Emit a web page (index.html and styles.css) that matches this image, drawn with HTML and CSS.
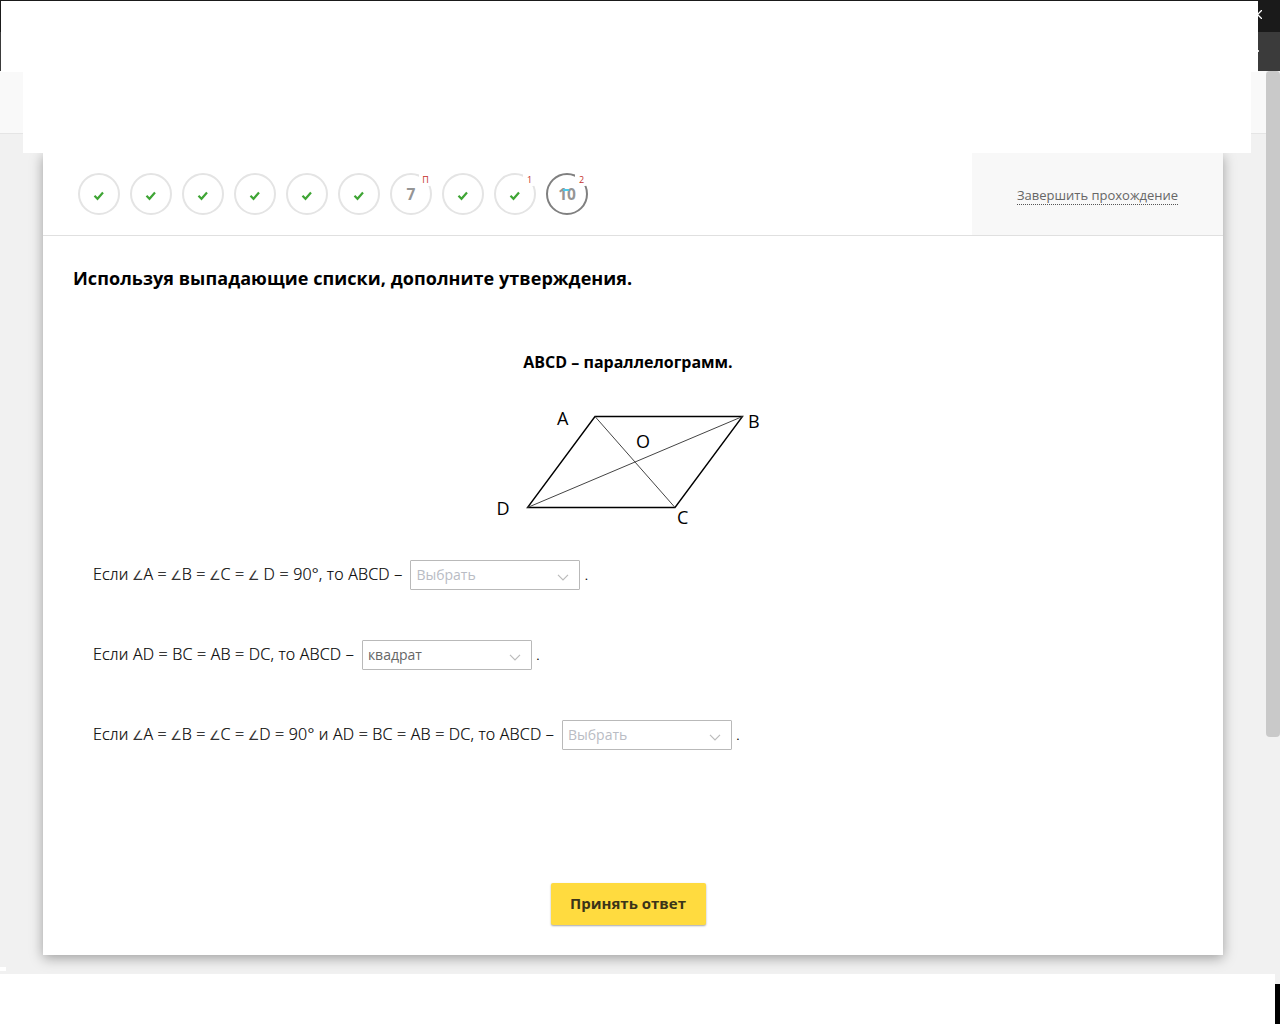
FILE: index.html
```
<!DOCTYPE html>
<html lang="ru">
  <head>
    <meta charset="utf-8" />
    <title>Тест</title>
    <link rel="stylesheet" href="styles.css" />
  </head>
  <body>
    <svg width="0" height="0" class="defs">
      <symbol id="check" viewBox="0 0 12 10">
        <path d="M1.5 4.8l3 3L10 1.6" fill="none" stroke="#3fa535" stroke-width="2.2" />
      </symbol>
      <symbol id="arrow" viewBox="0 0 12 7">
        <path d="M1 .8l5 5 5-5" fill="none" stroke="#bbb" stroke-width="1.2" />
      </symbol>
    </svg>

    <div class="window">
      <div class="titlebar">
        <svg class="close" width="9" height="9" viewBox="0 0 9 9">
          <path d="M0 0l9 9M9 0L0 9" stroke="#fff" stroke-width="1.3" />
        </svg>
      </div>
      <div class="toolbar"><span class="dot"></span></div>
      <div class="viewport">
        <div class="page">
          <div class="site-header"></div>
          <div class="card">
            <div class="steps-bar">
              <div class="steps">
                <div class="step"><svg><use href="#check" /></svg></div>
                <div class="step"><svg><use href="#check" /></svg></div>
                <div class="step"><svg><use href="#check" /></svg></div>
                <div class="step"><svg><use href="#check" /></svg></div>
                <div class="step"><svg><use href="#check" /></svg></div>
                <div class="step"><svg><use href="#check" /></svg></div>
                <div class="step">7<span class="badge">П</span></div>
                <div class="step"><svg><use href="#check" /></svg></div>
                <div class="step"><svg><use href="#check" /></svg><span class="badge">1</span></div>
                <div class="step active">10<span class="mark"></span><span class="badge">2</span></div>
              </div>
              <div class="finish"><a class="finish-link">Завершить прохождение</a></div>
            </div>

            <div class="task">
              <h1>Используя выпадающие списки, дополните утверждения.</h1>
              <p class="caption">ABCD – параллелограмм.</p>
              <svg class="figure" width="280" height="130" viewBox="0 0 280 130">
                <path d="M107 14.5h147.5L187 105.5H39.5z" fill="none" stroke="#000" stroke-width="1.4" />
                <path d="M107 14.5L187 105.5M39.5 105.5L254.5 14.5" stroke="#444" stroke-width="1" />
                <text x="69" y="23">A</text>
                <text x="260" y="26">B</text>
                <text x="189" y="122">C</text>
                <text x="8.5" y="113">D</text>
                <text x="148" y="46">O</text>
              </svg>

              <div class="line">
                <span>Если <i>∠</i>A = <i>∠</i>B = <i>∠</i>C = <i>∠</i> D = 90°, то ABCD –</span>
                <div class="select">Выбрать<svg><use href="#arrow" /></svg></div>
                <span>.</span>
              </div>
              <div class="line">
                <span>Если AD = BC = AB = DC, то ABCD –</span>
                <div class="select chosen">квадрат<svg><use href="#arrow" /></svg></div>
                <span>.</span>
              </div>
              <div class="line">
                <span>Если <i>∠</i>A = <i>∠</i>B = <i>∠</i>C = <i>∠</i>D = 90° и AD = BC = AB = DC, то ABCD –</span>
                <div class="select">Выбрать<svg><use href="#arrow" /></svg></div>
                <span>.</span>
              </div>

              <button class="submit">Принять ответ</button>
            </div>
          </div>
        </div>
        <div class="scrollbar"><div class="thumb"></div></div>
      </div>

      <!-- blank panels over the browser chrome -->
      <div class="cover cover-top"></div>
      <div class="cover cover-header"></div>
      <div class="cover cover-bottom"></div>
      <div class="cover cover-spot"></div>
      <div class="corner"></div>
    </div>
  </body>
</html>
```

FILE: styles.css
```
* {
  box-sizing: border-box;
}

body {
  margin: 0;
  font-family: "Open Sans", sans-serif;
  color: #000;
}

.defs {
  position: absolute;
}

.window {
  position: relative;
  width: 1280px;
  height: 1024px;
  overflow: hidden;
  display: flex;
  flex-direction: column;
}

.titlebar {
  height: 32px;
  flex: none;
  background-color: #1a1a1a;
  display: flex;
  justify-content: flex-end;
  padding: 10px 18px 0 0;
}

.toolbar {
  height: 39px;
  flex: none;
  background-color: #3b3b3b;
  display: flex;
  justify-content: flex-end;
  padding: 18px 21px 0 0;
}

.dot {
  width: 2px;
  height: 2px;
  background-color: #ddd;
}

.viewport {
  flex: 1;
  display: flex;
  background-color: #f1f1f1;
}

.page {
  flex: 1;
}

.site-header {
  height: 63px;
  background-color: #f9f9f9;
  border-bottom: 1px solid #e5e5e5;
}

.scrollbar {
  width: 14px;
}

.thumb {
  height: 666px;
  background-color: #c9c9c9;
  border-radius: 4px;
}

.card {
  width: 1180px;
  height: 802px;
  margin: 19px 0 0 43px;
  background-color: #fff;
  box-shadow: 0 3px 12px rgba(0, 0, 0, 0.35);
}

.steps-bar {
  height: 83px;
  display: flex;
  justify-content: space-between;
  border-bottom: 1px solid #e0e0e0;
}

.steps {
  display: flex;
  gap: 10px;
  padding: 20px 0 0 35px;
}

.step {
  position: relative;
  width: 42px;
  height: 42px;
  border: 2px solid #e4e4e4;
  border-radius: 50%;
  display: flex;
  align-items: center;
  justify-content: center;
  font-size: 15.5px;
  line-height: 22px;
  font-weight: 700;
  color: #959595;
}

.step svg {
  width: 12px;
  height: 10px;
  margin-top: 4px;
}

.step.active {
  border-color: #808080;
}

.badge {
  position: absolute;
  top: -3px;
  right: -2px;
  width: 13px;
  height: 14px;
  background-color: #fff;
  border-radius: 3px;
  color: #c4302b;
  font-size: 9px;
  font-weight: 400;
  line-height: 15px;
  text-align: center;
}

.mark {
  position: absolute;
  top: 14px;
  left: 15px;
  width: 6px;
  height: 2px;
  background-color: #4cc9e8;
}

.finish {
  width: 251px;
  background-color: #f8f8f8;
  display: flex;
  justify-content: center;
  align-items: center;
}

.finish-link {
  color: #666;
  font-size: 13px;
  line-height: 18px;
  border-bottom: 1px dotted #555;
  margin-top: 3px;
}

.task {
  display: flex;
  flex-direction: column;
  padding: 0 50px;
}

h1 {
  margin: 29px 0 0 -20px;
  font-size: 18px;
  line-height: 26px;
  font-weight: 700;
  letter-spacing: 0.055px;
}

.caption {
  margin: 59px 0 0;
  width: 1070px;
  text-align: center;
  font-size: 16px;
  line-height: 24px;
  font-weight: 700;
}

.figure {
  margin: 28px 0 0 395px;
}

.figure text {
  font-family: "Open Sans", sans-serif;
  font-size: 18px;
}

.line {
  display: flex;
  align-items: center;
  height: 30px;
  margin-bottom: 50px;
  font-size: 16px;
  font-weight: 300;
  letter-spacing: 0.2px;
  white-space: pre;
}

.line > span {
  padding-bottom: 2px;
  -webkit-text-stroke: 0.2px #000;
}

.figure + .line {
  margin-top: 28px;
}

.line i {
  display: inline-block;
  width: 10.5px;
  font: 13px "DejaVu Sans", sans-serif;
  color: #333;
  text-indent: -1px;
  -webkit-text-stroke: 0;
}

.select {
  width: 170px;
  height: 30px;
  margin: 0 4px 0 8px;
  padding: 0 10px 2px 5px;
  border: 1px solid #b9b9b9;
  border-radius: 1px;
  display: flex;
  align-items: center;
  justify-content: space-between;
  font-size: 14px;
  font-weight: 400;
  letter-spacing: 0;
  color: #b9bcc4;
}

.select.chosen {
  color: #666;
}

.select svg {
  width: 12px;
  height: 7px;
  margin-top: 7px;
}

.submit {
  width: 155px;
  height: 42px;
  margin: 83px 0 0 457.5px;
  padding: 0 0 2px;
  border: none;
  border-radius: 2px;
  background-color: #ffdb3f;
  box-shadow: 0 1px 2px rgba(0, 0, 0, 0.35);
  font-family: inherit;
  font-size: 15px;
  font-weight: 700;
  color: #3b3418;
}

.cover {
  position: absolute;
  background-color: #fff;
}

.cover-top {
  top: 1px;
  left: 1px;
  width: 1257px;
  height: 71px;
}

.cover-header {
  top: 71px;
  left: 23px;
  width: 1228px;
  height: 82px;
}

.cover-bottom {
  top: 974px;
  left: 0;
  width: 1275px;
  height: 50px;
}

.cover-spot {
  top: 967px;
  left: 0;
  width: 6px;
  height: 4px;
}

.corner {
  position: absolute;
  right: 0;
  bottom: 0;
  width: 5px;
  height: 40px;
  background-color: #000;
}
```
